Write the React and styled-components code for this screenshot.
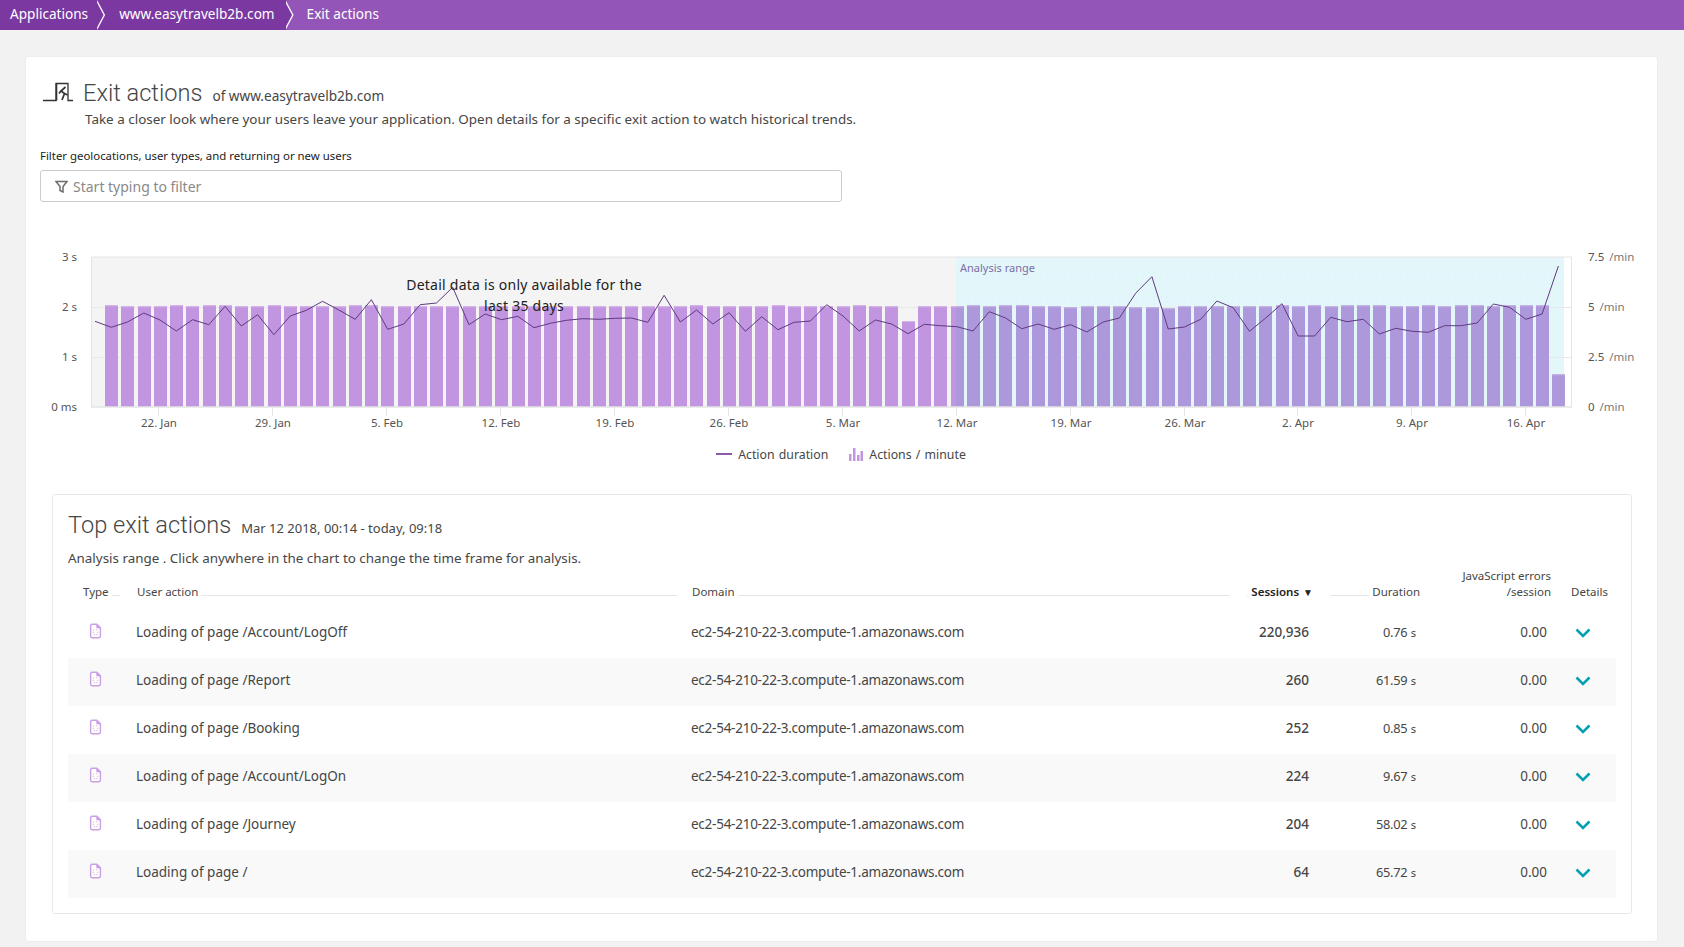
import React from 'react';
import styled, { createGlobalStyle } from 'styled-components';

const FONT = `"Noto Sans", "Open Sans", sans-serif`;

const GlobalStyle = createGlobalStyle`
    html, body {
        margin : 0;
        padding : 0;
        background : #f2f2f2;
        font-family : ${FONT};
        color : #454646;
    }
    * { box-sizing : border-box; }
`;

const TopBar = styled.div`
    display : flex;
    height : 30px;
    background : #9355b7;
    color : white;
    font-size : 13.6px;
    line-height : 28px;
`;

const Crumb = styled.div`
    position : relative;
    padding : ${(p) => p.$pad};
    background : ${(p) => (p.$active ? '#7c38a1' : 'transparent')};

    ${(p) => p.$active && `
        &::before, &::after {
            content : '';
            position : absolute;
            top : 0;
            z-index : 1;
            width : 8px;
            height : 30px;
            clip-path : polygon(0 0, 100% 50%, 0 100%);
        }
        &::before { left : 100%; background : white; }
        &::after { left : calc(100% - 1.5px); background : #7c38a1; }
    `}
`;

const Main = styled.div`
    padding : 26px 26px 6px 25px;
`;

const Card = styled.div`
    background : white;
    border : 1px solid #ededed;
    border-radius : 3px;
    padding : 20px 15px 27px 14px;
`;

const TitleRow = styled.div`
    display : flex;
    align-items : center;
    height : 32px;
`;

const ExitIcon = styled.svg`
    width : 32px;
    height : 22px;
    margin : 0 9px 0 2px;
    flex : none;
`;

const PageTitle = styled.h1`
    margin : 0;
    font-family : "Roboto", sans-serif;
    font-weight : 300;
    font-size : 23.6px;
    color : #454646;
`;

const TitleOf = styled.span`
    margin-left : 10px;
    padding-top : 4px;
    font-size : 13.6px;
`;

const Intro = styled.p`
    margin : 0 0 0 45px;
    font-size : 13.45px;
    line-height : 20px;
`;

const FilterLabel = styled.div`
    margin-top : 19px;
    font-size : 11.4px;
    line-height : 16px;
    color : #222;
`;

const FilterBox = styled.div`
    display : flex;
    align-items : center;
    gap : 5px;
    width : 802px;
    height : 32px;
    margin-top : 6px;
    padding-left : 14px;
    border : 1px solid #ccc;
    border-radius : 3px;
    font-size : 14px;
    color : #898989;
`;

const ChartWrap = styled.div`
    position : relative;
    margin-top : 38px;
`;

const ChartSvg = styled.svg`
    display : block;
    width : 1602px;
    height : 200px;
    font-family : ${FONT};
`;

const DetailNote = styled.div`
    position : absolute;
    left : 360px;
    top : 34px;
    width : 248px;
    padding : 0 4px;
    font-size : 14px;
    letter-spacing : 0.25px;
    line-height : 21px;
    text-align : center;
    color : #222;
`;

const Legend = styled.div`
    display : flex;
    align-items : center;
    justify-content : center;
    gap : 21px;
    height : 28px;
    font-size : 12.3px;
`;

const LegendItem = styled.div`
    display : flex;
    align-items : center;
    gap : 6px;
    word-spacing : 1px;
`;

const LegendLine = styled.div`
    width : 16px;
    height : 2px;
    background : #8b5da8;
`;

const Panel = styled.div`
    width : 1580px;
    margin : 26px 0 0 12px;
    padding : 14px 15px 15px 15px;
    border : 1px solid #e8e8e8;
    border-radius : 3px;
`;

const PanelTitleRow = styled.div`
    display : flex;
    align-items : center;
    height : 32px;
`;

const PanelDate = styled.span`
    margin-left : 10px;
    padding-top : 5px;
    font-size : 13px;
`;

const PanelIntro = styled.p`
    margin : 7px 0 0;
    font-size : 13.4px;
    line-height : 20px;
`;

const COLUMNS = '64px 555px 553px 80px 107px 131px 58px';

const TableHead = styled.div`
    display : grid;
    grid-template-columns : ${COLUMNS};
    align-items : end;
    padding-bottom : 10px;
    font-size : 11.5px;
    line-height : 16px;
`;

const HeadCell = styled.div`
    display : flex;
    align-items : flex-end;
    justify-content : ${(p) => (p.$right ? 'flex-end' : 'flex-start')};
    gap : 3px;
    padding : ${(p) => p.$pad || '0'};
    text-align : ${(p) => (p.$right ? 'right' : 'left')};
    font-weight : ${(p) => (p.$bold ? 600 : 400)};
    color : ${(p) => (p.$bold ? '#222' : '#454646')};
`;

const SortMark = styled.span`
    margin-left : 1px;
    font-size : 10px;
`;

const Rule = styled.div`
    flex : 1;
    height : 1px;
    margin-bottom : 4px;
    background : #e6e6e6;
`;

const Row = styled.div`
    display : grid;
    grid-template-columns : ${COLUMNS};
    align-items : center;
    height : 48px;
    padding-bottom : 4px;
    font-size : 13.5px;
    background : ${(p) => (p.$striped ? '#f9f9f9' : 'white')};
`;

const Cell = styled.div`
    padding : ${(p) => p.$pad || '0'};
    text-align : ${(p) => p.$align || 'left'};
    font-weight : ${(p) => (p.$bold ? 500 : 400)};
`;

const IconCell = styled(Cell)`
    display : flex;
`;

const DomainCell = styled(Cell)`
    letter-spacing : -0.25px;
`;

const DurationValue = styled.span`
    font-size : 12.8px;
    letter-spacing : -0.3px;
`;

const Unit = styled.span`
    font-size : 11px;
`;

const rows = [
    ['/Account/LogOff', '220,936', '0.76'],
    ['/Report', '260', '61.59'],
    ['/Booking', '252', '0.85'],
    ['/Account/LogOn', '224', '9.67'],
    ['/Journey', '204', '58.02'],
    ['/', '64', '65.72'],
];

const lineA = [274, 292, 276, 249, 270, 303, 269, 284, 229, 288, 254, 314, 258, 241, 214, 240, 268, 209, 298, 282, 224, 219, 172, 284, 252, 269, 259, 293, 280, 271, 266, 268];
const lineB = [265, 264, 277, 196, 276, 240, 282, 248, 304, 260, 299, 277, 273, 224, 258, 303, 270, 282, 311, 283, 287, 290, 303, 245, 264, 296, 282, 298, 284, 306];
const lineC = [276, 264, 190, 140, 297, 291, 268, 213, 233, 304, 264, 221, 318, 318, 262, 275, 268, 312, 295, 304, 307, 287, 287, 279, 222, 232, 268, 252, 108];

const linePoints = [...lineA, ...lineB, ...lineC]
    .map((z, i) => `${(95 + i * 16.26).toFixed(1)},${(230 + z / 3).toFixed(1)}`)
    .join(' ');

const high = [0, 4, 6, 7, 10, 15, 16, 36, 41, 46, 53, 55, 56, 72, 74, 76, 77, 78, 81, 83, 84, 86, 87, 88];
const topOverride = { 49: 321, 59: 307.3, 63: 307.3, 64: 307.3, 65: 308.3, 89: 374.3 };

const bars = Array.from({ length: 90 }, (_, i) => ({
    x: Math.round(105 + i * 16.26),
    top: topOverride[i] || (high.includes(i) ? 305.3 : 306.3),
}));

const RANGE_X = 956;
const labelsX = ['22. Jan', '29. Jan', '5. Feb', '12. Feb', '19. Feb', '26. Feb', '5. Mar', '12. Mar', '19. Mar', '26. Mar', '2. Apr', '9. Apr', '16. Apr'];
const labelsLeft = [['3 s', 257], ['2 s', 307], ['1 s', 357], ['0 ms', 407]];
const labelsRight = [['7.5', 257], ['5', 307], ['2.5', 357], ['0', 407]];

const Bar = ({ x, top }) => {
    const height = 407 - top;
    const split = x < RANGE_X && x + 13 > RANGE_X;
    return (
        <g>
            <rect x={x} y={top} width={13} height={height} fill={x >= RANGE_X ? '#ae98dc' : '#c195df'} />
            {split && <rect x={RANGE_X} y={top} width={x + 13 - RANGE_X} height={height} fill="#ae98dc" />}
            <rect x={x} y={top} width={13} height={1} fill={x >= RANGE_X ? '#c3b3e6' : '#d3b3e8'} />
        </g>
    );
};

const Chart = () => (
    <ChartSvg viewBox="40 240 1602 200">
        <defs>
            <pattern id="dots" width="6" height="6" patternUnits="userSpaceOnUse">
                <rect x="2" y="2" width="1" height="1" fill="#daf0f4" />
            </pattern>
        </defs>
        <rect x={91} y={257} width={RANGE_X - 91} height={150} fill="#f4f4f4" />
        <rect x={RANGE_X} y={257} width={1564 - RANGE_X} height={150} fill="#e3f6f9" />
        <rect x={RANGE_X} y={262} width={1564 - RANGE_X} height={44} fill="url(#dots)" />
        <path d="M91 307.5H1572M91 357.5H1572" stroke="#e8e8e8" />
        {bars.map((b) => <Bar key={b.x} {...b} />)}
        <path d="M91.5 407V257H1571.5V407" fill="none" stroke="#e4e4e4" />
        <path d="M91 407H1572" stroke="#e4e4e4" strokeWidth="1.5" />
        <polyline points={linePoints} fill="none" stroke="#5f3a80" strokeWidth="1" />
        <text x={960} y={272} fontSize="11" fill="#7d6ea8">Analysis range</text>
        {labelsX.map((label, i) => {
            const x = Math.round(158.4 + i * 113.9);
            return (
                <g key={label}>
                    <path d={`M${x + 0.5} 407V416`} stroke="#e4e4e4" />
                    <text x={x + 1} y={427} fontSize="11.5" textAnchor="middle" fill="#555">{label}</text>
                </g>
            );
        })}
        {labelsLeft.map(([label, y]) => (
            <text key={label} x={77} y={y + 4} fontSize="11.5" textAnchor="end" fill="#555">{label}</text>
        ))}
        {labelsRight.map(([label, y]) => (
            <text key={label} x={1588} y={y + 4} fontSize="11.5" fill="#555">{label}<tspan dx="5" fill="#777">/min</tspan></text>
        ))}
    </ChartSvg>
);

const DocIcon = () => (
    <svg width="13" height="16" viewBox="0 0 14 18">
        <path d="M1.500 3a1.500 1.500 0 0 1 1.500-1.500h5.500l4 4V15a1.500 1.500 0 0 1-1.500 1.500H3A1.500 1.500 0 0 1 1.500 15z" fill="white" stroke="#c9a0e4" strokeWidth="1.6" />
        <path d="M8.500 1.500v4h4z" fill="#c9a0e4" stroke="#c9a0e4" />
        <path d="M4 8h1.500M7.500 7.500h1.500M4 10.500h1.500M8.500 10.500h1.500M5 13h1.500M7.500 13h1.500" stroke="#cdb4e2" strokeWidth="1" />
    </svg>
);

const Chevron = () => (
    <svg width="16" height="10" viewBox="0 0 16 10">
        <path d="M1.500 1.500L8 8l6.500-6.500" fill="none" stroke="#00a1b2" strokeWidth="2.500" />
    </svg>
);

const App = () => (
    <React.Fragment>
        <GlobalStyle />
        <TopBar>
            <Crumb $active $pad="0 9px 0 10px">Applications</Crumb>
            <Crumb $active $pad="0 11px 0 22px">www.easytravelb2b.com</Crumb>
            <Crumb $pad="0 0 0 21px">Exit actions</Crumb>
        </TopBar>
        <Main>
            <Card>
                <TitleRow>
                    <ExitIcon viewBox="0 0 32 22">
                        <path d="M1 18.500H14V1.500H26V18.500H31" fill="none" stroke="#333" strokeWidth="1.300" />
                        <path d="M14.500 1.500V18.500" stroke="#333" strokeWidth="1.600" />
                        <path d="M23.500 5l-4.500 4 3.500 2.500-2.500 6.500M19 9l-2 2.500M22.500 11.500l3 1.500" fill="none" stroke="#333" strokeWidth="1.700" />
                    </ExitIcon>
                    <PageTitle>Exit actions</PageTitle>
                    <TitleOf>of www.easytravelb2b.com</TitleOf>
                </TitleRow>
                <Intro>Take a closer look where your users leave your application. Open details for a specific exit action to watch historical trends.</Intro>
                <FilterLabel>Filter geolocations, user types, and returning or new users</FilterLabel>
                <FilterBox>
                    <svg width="13" height="13" viewBox="0 0 13 13">
                        <path d="M1 1.500h11L8 6.500V12L5 10.500v-4z" fill="none" stroke="#6d6d6d" strokeWidth="1.500" />
                    </svg>
                    Start typing to filter
                </FilterBox>
                <ChartWrap>
                    <Chart />
                    <DetailNote>Detail data is only available for the last 35 days</DetailNote>
                    <Legend>
                        <LegendItem>
                            <LegendLine />
                            Action duration
                        </LegendItem>
                        <LegendItem>
                            <svg width="14" height="13" viewBox="0 0 14 13">
                                <path d="M0 6h2.500v7H0zM4 0h2.500v13H4zM8 7h2.500v6H8zM11.500 3H14v10h-2.500z" fill="#c195df" />
                            </svg>
                            Actions / minute
                        </LegendItem>
                    </Legend>
                </ChartWrap>
                <Panel>
                    <PanelTitleRow>
                        <PageTitle>Top exit actions</PageTitle>
                        <PanelDate>Mar 12 2018, 00:14 - today, 09:18</PanelDate>
                    </PanelTitleRow>
                    <PanelIntro>Analysis range . Click anywhere in the chart to change the time frame for analysis.</PanelIntro>
                    <TableHead>
                        <HeadCell $pad="0 12px 0 15px">Type<Rule /></HeadCell>
                        <HeadCell $pad="0 10px 0 5px">User action<Rule /></HeadCell>
                        <HeadCell $pad="0 10px 0 5px">Domain<Rule /></HeadCell>
                        <HeadCell $bold $pad="0 7px 0 7px"><Rule />Sessions<SortMark>▼</SortMark></HeadCell>
                        <HeadCell $pad="0 7px 0 10px"><Rule />Duration</HeadCell>
                        <HeadCell $right $pad="0 7px 0 0"><span>JavaScript errors<br />/session</span></HeadCell>
                        <HeadCell $pad="0 0 0 13px">Details</HeadCell>
                    </TableHead>
                    {rows.map(([page, sessions, duration], i) => (
                        <Row key={page} $striped={i % 2 === 1}>
                            <IconCell $pad="0 0 2px 21px"><DocIcon /></IconCell>
                            <Cell $pad="0 0 0 4px">Loading of page {page}</Cell>
                            <DomainCell $pad="0 0 0 4px">ec2-54-210-22-3.compute-1.amazonaws.com</DomainCell>
                            <Cell $align="right" $pad="0 11px 0 0" $bold>{sessions}</Cell>
                            <Cell $align="right" $pad="0 11px 0 0"><DurationValue>{duration}</DurationValue> <Unit>s</Unit></Cell>
                            <Cell $align="right" $pad="0 11px 0 0">0.00</Cell>
                            <IconCell $pad="2px 0 0 17px"><Chevron /></IconCell>
                        </Row>
                    ))}
                </Panel>
            </Card>
        </Main>
    </React.Fragment>
);

export default App;
